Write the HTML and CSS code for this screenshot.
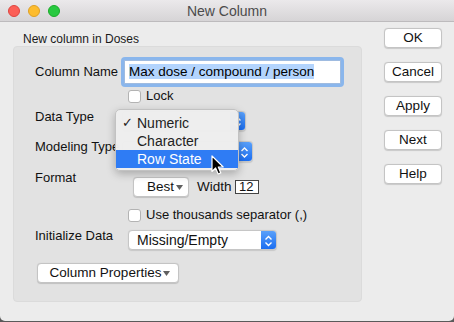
FILE: index.html
```html
<!DOCTYPE html>
<html>
<head>
<meta charset="utf-8">
<link rel="stylesheet" href="styles.css">
</head>
<body>
<div class="window">
  <div class="titlebar">
    <div class="lights">
      <span class="light red"></span>
      <span class="light yellow"></span>
      <span class="light green"></span>
    </div>
    <div class="title">New Column</div>
  </div>
  <div class="content">
    <div class="left">
      <div class="caption">New column in Doses</div>
      <div class="group">
        <div class="row row-name">
          <div class="label label-name">Column Name</div>
          <div class="field-ring"><div class="field"><span class="sel">Max dose / compound / person</span></div></div>
        </div>
        <div class="row row-check row-lock">
          <span class="check"></span><span class="check-text">Lock</span>
        </div>
        <div class="row row-type">
          <div class="label label-type">Data Type</div>
          <div class="popup popup-type">
            <span class="popup-text"></span>
            <span class="stepper"><svg width="15" height="20" viewBox="0 0 15 20"><path d="M4.5 8.5 L7.5 5.5 L10.5 8.5 M4.5 11.5 L7.5 14.5 L10.5 11.5" fill="none" stroke="#fff" stroke-width="1.4"/></svg></span>
          </div>
        </div>
        <div class="row row-model">
          <div class="label label-type">Modeling Type</div>
          <div class="popup popup-model">
            <span class="popup-text"></span>
            <span class="stepper"><svg width="15" height="21" viewBox="0 0 15 21"><path d="M4.5 9 L7.5 6 L10.5 9 M4.5 12 L7.5 15 L10.5 12" fill="none" stroke="#fff" stroke-width="1.4"/></svg></span>
          </div>
        </div>
        <div class="row row-format">
          <div class="label label-format">Format</div>
          <div class="btn btn-best">Best<svg class="tri" width="7" height="5" viewBox="0 0 7 5"><path d="M0 0 L7 0 L3.5 5 Z" fill="#606060"/></svg></div>
          <span class="width-label">Width</span>
          <span class="width-box">12</span>
        </div>
        <div class="row row-check row-thou">
          <span class="check"></span><span class="check-text">Use thousands separator (,)</span>
        </div>
        <div class="row row-init">
          <div class="label label-init">Initialize Data</div>
          <div class="popup popup-init">
            <span class="popup-text">Missing/Empty</span>
            <span class="stepper"><svg width="15" height="20" viewBox="0 0 15 20"><path d="M4.5 8.5 L7.5 5.5 L10.5 8.5 M4.5 11.5 L7.5 14.5 L10.5 11.5" fill="none" stroke="#fff" stroke-width="1.4"/></svg></span>
          </div>
        </div>
        <div class="row row-props">
          <div class="btn btn-props">Column Properties<svg class="tri" width="7" height="5" viewBox="0 0 7 5"><path d="M0 0 L7 0 L3.5 5 Z" fill="#606060"/></svg></div>
        </div>
      </div>
    </div>
    <div class="buttons">
      <div class="btn btn-side">OK</div>
      <div class="btn btn-side">Cancel</div>
      <div class="btn btn-side">Apply</div>
      <div class="btn btn-side">Next</div>
      <div class="btn btn-side">Help</div>
    </div>
  </div>
  <div class="menu">
    <div class="menu-item"><span class="tick">✓</span>Numeric</div>
    <div class="menu-item">Character</div>
    <div class="menu-item active">Row State</div>
  </div>
  <svg class="cursor" width="14" height="21" viewBox="0 0 14 21"><path d="M1 1 L1 16.5 L4.6 13 L7.2 19 L9.8 17.9 L7.3 12 L12.2 12 Z" fill="#000" stroke="#fff" stroke-width="1.2" stroke-linejoin="round"/></svg>
</div>
</body>
</html>
```

FILE: styles.css
```css
* { box-sizing: border-box; }
html, body { margin: 0; padding: 0; }
body {
  background: #5a5a5a;
  width: 454px;
  height: 322px;
  overflow: hidden;
  font-family: "Liberation Sans", Arial, sans-serif;
  font-size: 13px;
  color: #111;
}
.window {
  position: relative;
  width: 454px;
  height: 321px;
  background: #ececec;
  border-radius: 0 0 5px 5px;
  overflow: hidden;
}
.titlebar {
  position: relative;
  height: 22px;
  background: linear-gradient(#ebe9eb, #d6d4d6);
  border-bottom: 1px solid #bdbbbd;
  display: flex;
  align-items: center;
  justify-content: center;
}
.lights {
  position: absolute;
  left: 8px;
  top: 5px;
  display: flex;
  gap: 8px;
}
.light {
  width: 12px;
  height: 12px;
  border-radius: 50%;
}
.red { background: #fc5f57; border: 0.5px solid #de4540; }
.yellow { background: #fdbc2e; border: 0.5px solid #dea024; }
.green { background: #28c940; border: 0.5px solid #1aab29; }
.title {
  font-size: 14px;
  color: #4b4b4b;
  line-height: 16px;
}
.content {
  display: flex;
}
.left {
  width: 362px;
  padding-left: 13px;
}
.caption {
  margin-top: 10px;
  padding-left: 10px;
  font-size: 12px;
  line-height: 14px;
  color: #1a1a1a;
}
.group {
  width: 349px;
  height: 256px;
  background: #e2e2e2;
  border: 1px solid #dbdbdb;
  border-radius: 4px;
  padding-left: 21px;
}
.row {
  display: flex;
  align-items: flex-start;
  line-height: 15px;
}
.label { flex: none; }
.row-name { margin-top: 10px; height: 31px; }
.label-name { width: 86px; margin-top: 7px; }
.field-ring {
  width: 223px;
  height: 30px;
  border-radius: 4px;
  background: #8ab6ec;
  padding: 3px;
}
.field {
  height: 24px;
  background: #fff;
  border: 1px solid #9fbbe0;
  padding-left: 4px;
  padding-top: 3px;
  font-size: 13.5px;
  line-height: 16px;
}
.sel { background: #b3d4fd; color: #000; }
.row-check { padding-left: 93px; height: 15px; }
.check {
  width: 13px;
  height: 13px;
  margin-top: 2px;
  background: #fff;
  border: 1px solid #b3b3b3;
  border-radius: 3px;
  margin-right: 5px;
}
.row-type { margin-top: 6px; height: 22px; }
.label-type { width: 87px; }
.popup {
  position: relative;
  margin-top: 2px;
  height: 20px;
  background: #fff;
  border: 1px solid #c6c6c6;
  border-radius: 4px;
  box-shadow: 0 0.5px 1px rgba(0,0,0,0.12);
  display: flex;
  align-items: center;
  justify-content: space-between;
  overflow: hidden;
}
.popup-text { padding-left: 8px; line-height: 16px; font-size: 14px; }
.stepper {
  display: flex;
  width: 15px;
  height: 100%;
  background: linear-gradient(#59a0fa, #1b6ef1);
}
.popup-type { width: 124px; }
.row-model { margin-top: 8px; height: 23px; }
.popup-model { width: 131px; height: 21px; }
.row-format { margin-top: 8px; height: 27px; }
.label-format { width: 98px; }
.btn {
  background: #fff;
  border: 1px solid #c4c4c4;
  border-radius: 4px;
  box-shadow: 0 0.5px 1px rgba(0,0,0,0.15);
  height: 20px;
  line-height: 18px;
  font-size: 13.5px;
  display: flex;
  align-items: center;
  justify-content: center;
}
.btn-best {
  margin-top: 7px;
  width: 56px;
  justify-content: flex-end;
  padding-right: 5px;
}
.tri { margin-left: 2px; margin-top: 1px; }
.width-label { margin-left: 8px; margin-top: 9px; font-size: 13.5px; }
.width-box {
  margin-left: 3px;
  margin-top: 10px;
  width: 24px;
  height: 14px;
  background: #fff;
  border: 1px solid #444;
  line-height: 12px;
  text-align: right;
  padding-right: 4px;
}
.row-thou { margin-top: 10px; }
.row-init { margin-top: 6px; height: 22px; }
.label-init { width: 93px; }
.popup-init { width: 149px; }
.row-props { margin-top: 13px; padding-left: 2px; }
.btn-props { width: 142px; padding-left: 4px; }
.buttons {
  margin-left: 22px;
  padding-top: 6px;
  display: flex;
  flex-direction: column;
  gap: 14px;
}
.btn-side { width: 58px; }
.menu {
  position: absolute;
  left: 115px;
  top: 109px;
  width: 124px;
  height: 62px;
  padding: 4px 0;
  background: rgba(238,238,238,0.98);
  border: 0.5px solid #c2c2c2;
  border-radius: 5px;
  box-shadow: 0 3px 9px rgba(0,0,0,0.25);
}
.menu-item {
  position: relative;
  height: 18px;
  line-height: 18px;
  padding-left: 21px;
  font-size: 14px;
  color: #222;
}
.tick {
  position: absolute;
  left: 6px;
  top: 0;
  font-family: "DejaVu Sans", sans-serif;
  font-size: 13px;
  font-weight: bold;
}
.menu-item.active {
  background: #2f7cf4;
  color: #fff;
}
.cursor {
  position: absolute;
  left: 211px;
  top: 155px;
}
```
